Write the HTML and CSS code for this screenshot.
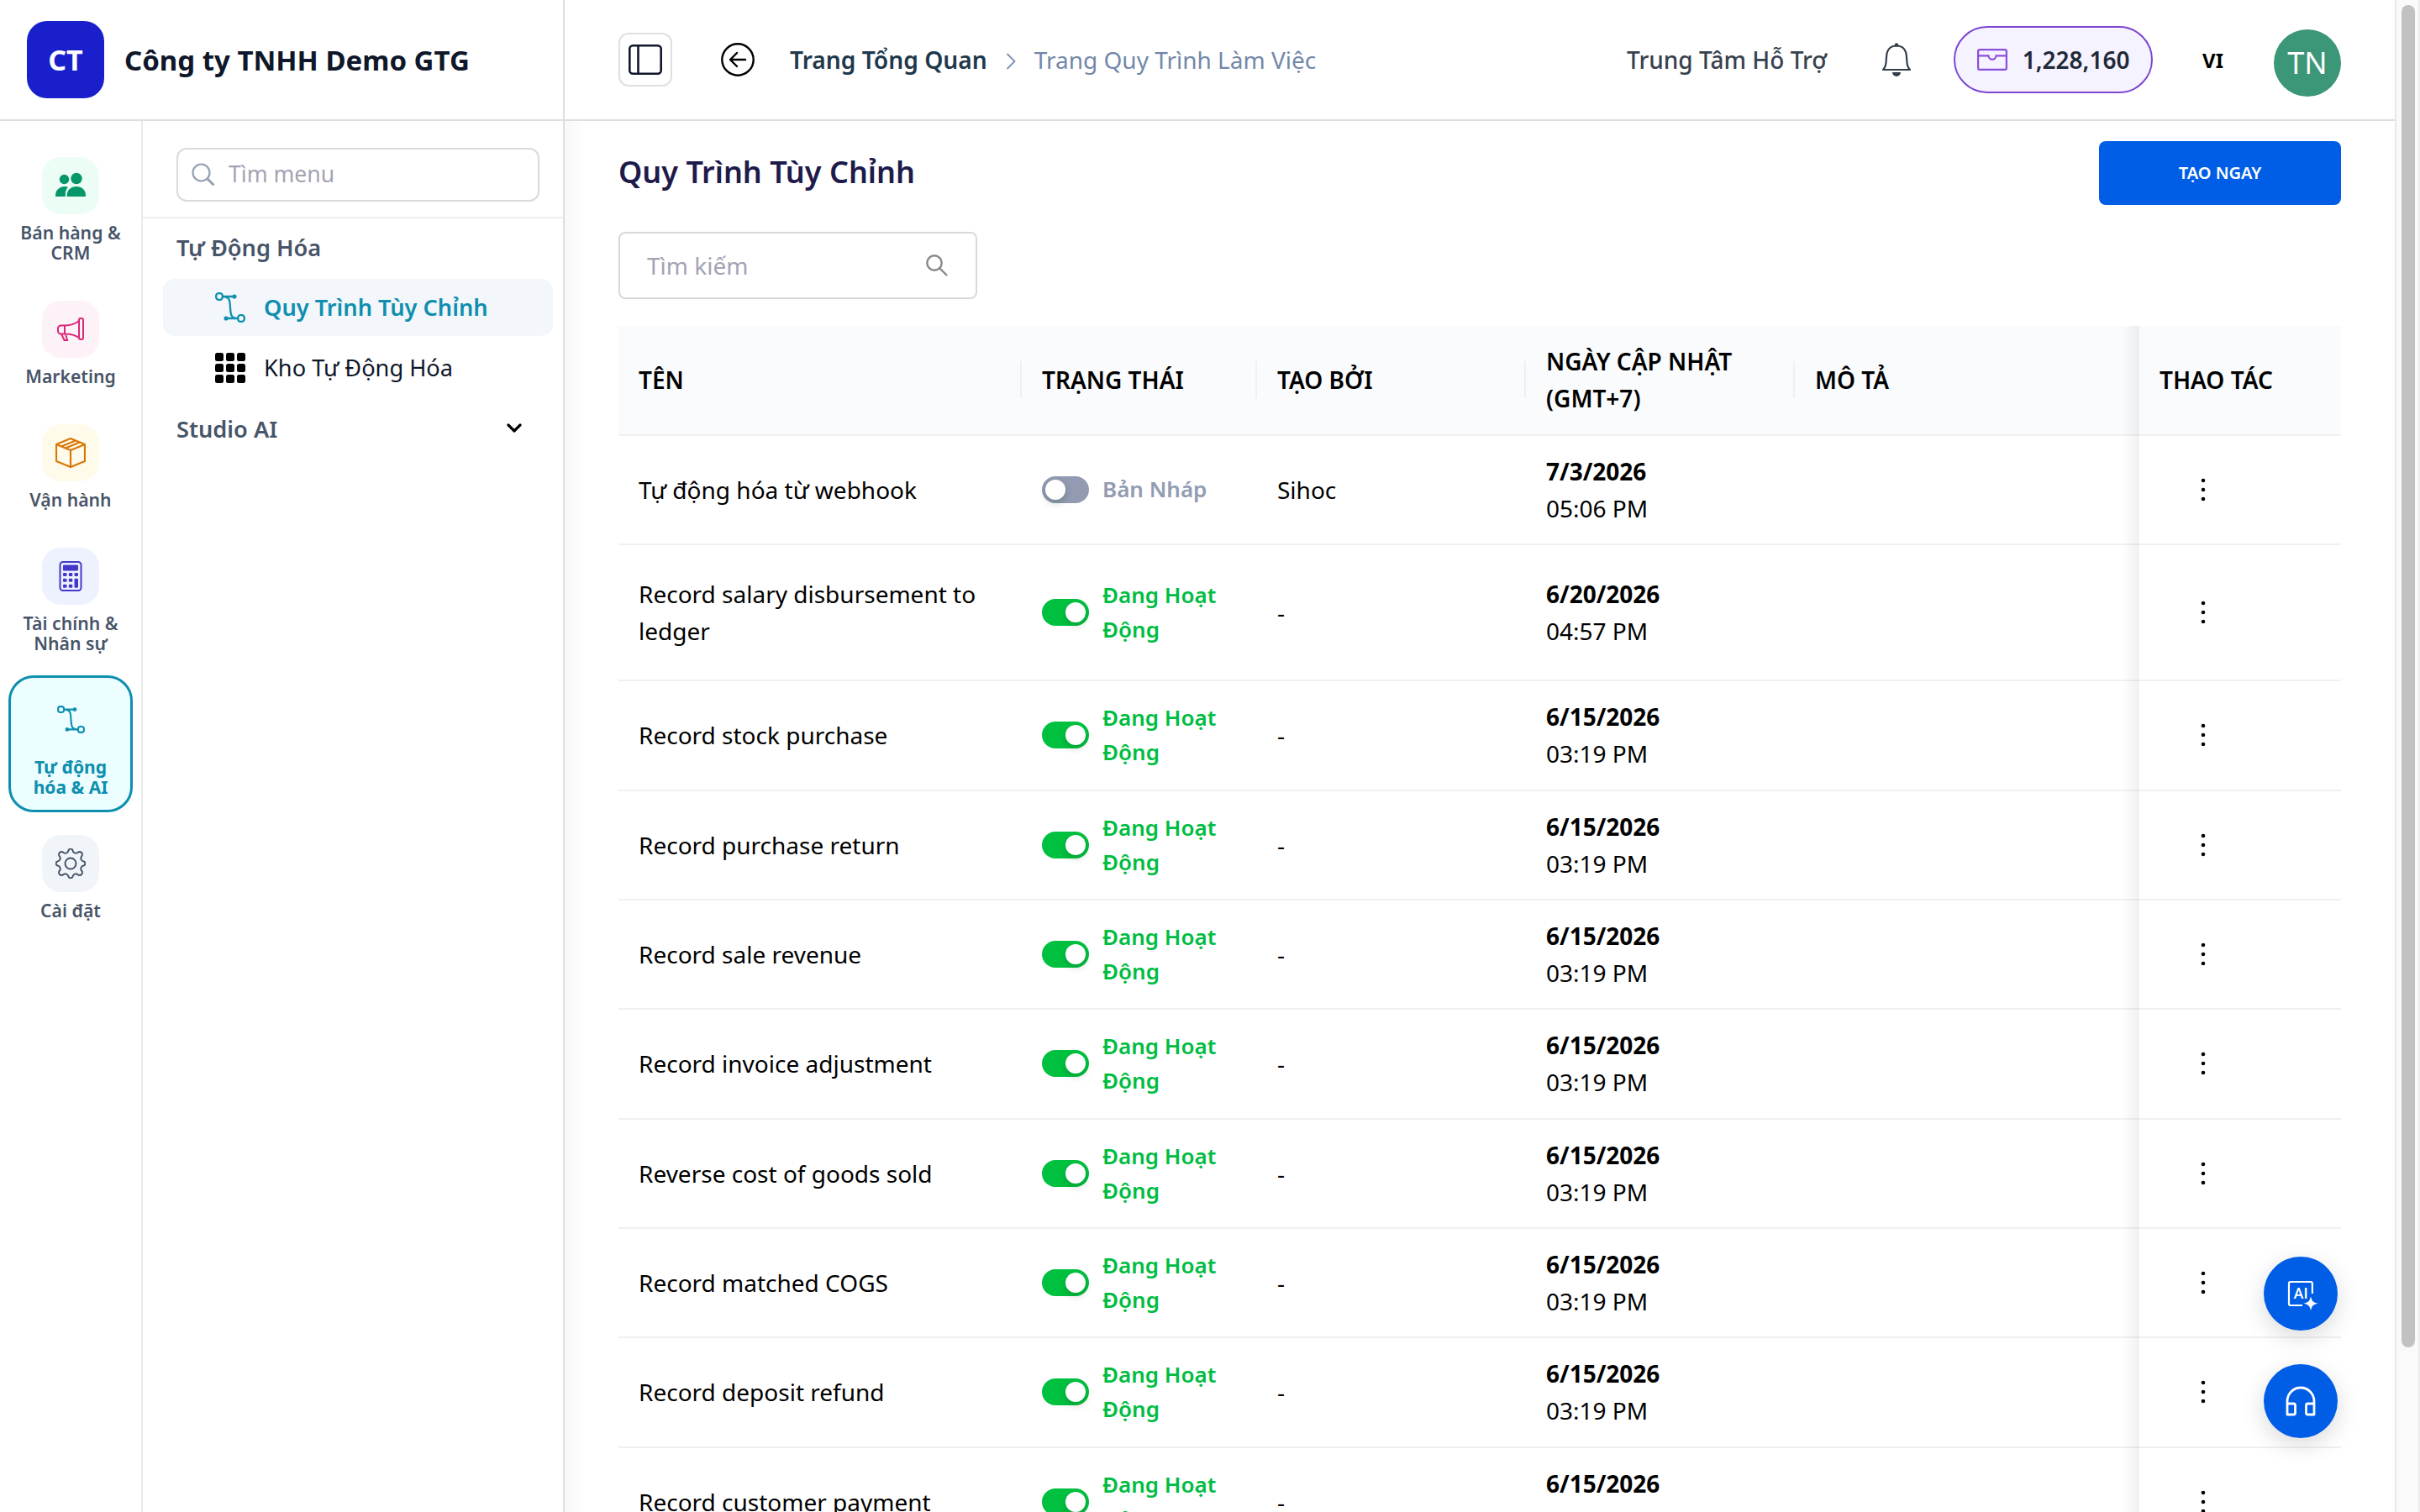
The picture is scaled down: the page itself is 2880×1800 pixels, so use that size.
FILE: index.html
```html
<!DOCTYPE html>
<html lang="vi">
<head>
    <meta charset="UTF-8">
    <meta name="viewport" content="width=device-width, initial-scale=1.0">
    <title>Quy Trình Tùy Chỉnh</title>
    <link rel="stylesheet" href="styles.css">
</head>
<body>

    <!-- Shared icons -->
    <svg class="sprite">
        <symbol id="flow" viewBox="0 0 36 36" fill="none" stroke="currentColor" stroke-width="2.3">
            <rect x="1.2" y="1.2" width="7.6" height="7.6" rx="3"/>
            <rect x="27.2" y="27.2" width="7.6" height="7.6" rx="3"/>
            <path d="M9 5h13M14 31h13M9 5c9 0 8.500 6 9 13s0 13 9 13"/>
            <circle cx="23" cy="5" r="1.4" fill="currentColor"/>
            <circle cx="13" cy="31" r="1.4" fill="currentColor"/>
        </symbol>
        <symbol id="search" viewBox="0 0 28 28" fill="none" stroke="currentColor" stroke-width="2.2">
            <circle cx="11.5" cy="11.5" r="10"/>
            <path d="M18.5 18.5l8 8" stroke-width="3"/>
        </symbol>
        <symbol id="search-thin" viewBox="0 0 26 26" fill="none" stroke="currentColor" stroke-width="2.4">
            <circle cx="10" cy="10" r="8.700"/>
            <path d="M16 16l9 9"/>
        </symbol>
    </svg>

    <div class="app">
        <aside class="sidebar">
            <div class="brand">
                <div class="brand-logo">CT</div>
                <div class="brand-name">Công ty TNHH Demo GTG</div>
            </div>
            <div class="sidebar-body">
                <nav class="rail">
                    <a class="rail-item green">
                        <span class="rail-icon"><svg width="36" height="36" viewBox="0 0 36 36" fill="currentColor"><circle cx="10.500" cy="10.500" r="5.700"/><circle cx="25" cy="9.500" r="6.700"/><path d="M0 30c0-7 5-11 11-11 1.500 0 3 .2 4 .7C12.500 22 11.800 25 11.800 30v1H1c-.6 0-1-.4-1-1z"/><path d="M13.500 30.500C13.500 23 18.500 19 25 19s11 4 11 11c0 .6-.4 1-1 1H14z"/></svg></span>
                        <span class="rail-label">Bán hàng &amp;<br>CRM</span>
                    </a>
                    <a class="rail-item pink">
                        <span class="rail-icon"><svg width="36" height="36" viewBox="0 0 36 36" fill="none" stroke="currentColor" stroke-width="2"><rect x="28" y="5" width="5" height="25" rx="2"/><path d="M28 8C23 12 18 13.500 11 13.500H6.500a3.500 3.500 0 0 0-3.500 3.500v3a3.500 3.500 0 0 0 3.500 3.500H11c7 0 12 1 17 4.500M11 13.500v10M7 23.500l3.500 7.500h3.500l-2-7.500"/></svg></span>
                        <span class="rail-label">Marketing</span>
                    </a>
                    <a class="rail-item amber">
                        <span class="rail-icon"><svg width="36" height="36" viewBox="0 0 36 36" fill="none" stroke="currentColor" stroke-width="2.200" stroke-linejoin="round"><path d="M18 1l17 7v20l-17 7-17-7V8zM1 8l17 7 17-7M18 15v20M7 10.500l17-7M12 12.500l17-7"/></svg></span>
                        <span class="rail-label">Vận hành</span>
                    </a>
                    <a class="rail-item indigo">
                        <span class="rail-icon"><svg width="36" height="36" viewBox="0 0 36 36"><rect x="5.500" y="1" width="25" height="34" rx="3.500" fill="none" stroke="currentColor" stroke-width="2"/><g fill="currentColor"><rect x="9" y="4.500" width="18" height="7" rx="1"/><rect x="9" y="14" width="4.500" height="4" rx="1"/><rect x="15.800" y="14" width="4.500" height="4" rx="1"/><rect x="22.500" y="14" width="4.500" height="4" rx="1"/><rect x="9" y="20.800" width="4.500" height="4" rx="1"/><rect x="15.800" y="20.800" width="4.500" height="4" rx="1"/><rect x="22.500" y="20.800" width="4.500" height="11" rx="1"/><rect x="9" y="27.800" width="4.500" height="4" rx="1"/><rect x="15.800" y="27.800" width="4.500" height="4" rx="1"/></g></svg></span>
                        <span class="rail-label">Tài chính &amp;<br>Nhân sự</span>
                    </a>
                    <a class="rail-item active">
                        <span class="rail-icon"><svg width="33" height="33"><use href="#flow"/></svg></span>
                        <span class="rail-label">Tự động<br>hóa &amp; AI</span>
                    </a>
                    <a class="rail-item slate">
                        <span class="rail-icon"><svg width="36" height="36" viewBox="0 0 36 36" fill="none" stroke="currentColor" stroke-width="2" stroke-linejoin="round"><circle cx="18" cy="18" r="6.500"/><path d="M15.500 2.500a2.600 2.600 0 0 1 5 0c.6 3 3.400 4 6 2.500a2.600 2.600 0 0 1 4.500 4.500c-1.500 2.600-.5 5.400 2.500 6a2.600 2.600 0 0 1 0 5c-3 .6-4 3.400-2.500 6a2.600 2.600 0 0 1-4.500 4.500c-2.600-1.500-5.400-.5-6 2.500a2.600 2.600 0 0 1-5 0c-.6-3-3.400-4-6-2.500A2.600 2.600 0 0 1 5 26.500c1.500-2.600.5-5.400-2.500-6a2.600 2.600 0 0 1 0-5c3-.6 4-3.400 2.500-6A2.600 2.600 0 0 1 9.500 5c2.600 1.500 5.400.5 6-2.500z"/></svg></span>
                        <span class="rail-label">Cài đặt</span>
                    </a>
                </nav>

                <div class="menu">
                    <div class="menu-search">
                        <div class="menu-input">
                            <svg width="28" height="28"><use href="#search"/></svg>
                            <span>Tìm menu</span>
                        </div>
                    </div>
                    <div class="menu-group">Tự Động Hóa</div>
                    <a class="menu-item selected">
                        <svg width="36" height="36"><use href="#flow"/></svg>
                        <span>Quy Trình Tùy Chỉnh</span>
                    </a>
                    <a class="menu-item">
                        <svg width="36" height="36" viewBox="0 0 36 36"><g><rect width="10" height="10" rx="2.500"/><rect x="13" width="10" height="10" rx="2.500"/><rect x="26" width="10" height="10" rx="2.500"/><rect y="13" width="10" height="10" rx="2.500"/><rect x="13" y="13" width="10" height="10" rx="2.500"/><rect x="26" y="13" width="10" height="10" rx="2.500"/><rect y="26" width="10" height="10" rx="2.500"/><rect x="13" y="26" width="10" height="10" rx="2.500"/><rect x="26" y="26" width="10" height="10" rx="2.500"/></g></svg>
                        <span>Kho Tự Động Hóa</span>
                    </a>
                    <div class="menu-group">
                        <span>Studio AI</span>
                        <svg width="18" height="12" viewBox="0 0 18 12" fill="none" stroke="#000" stroke-width="3.200" stroke-linecap="round" stroke-linejoin="round"><path d="M2 2l7 7 7-7"/></svg>
                    </div>
                </div>
            </div>
        </aside>

        <div class="content">
            <header class="topbar">
                <button class="toggle-menu"><svg width="40" height="36" viewBox="0 0 40 36" fill="none" stroke="#0f172a" stroke-width="2.600"><rect x="1.300" y="1.300" width="37.400" height="33.400" rx="4"/><path d="M11.500 1v34"/></svg></button>
                <svg class="back" width="40" height="40" viewBox="0 0 40 40" fill="none" stroke="#000" stroke-width="2.400"><circle cx="20" cy="20" r="18.700"/><path d="M29 20H12M19 12l-8 8 8 8" stroke-linecap="round" stroke-linejoin="round"/></svg>
                <div class="breadcrumb">
                    <b>Trang Tổng Quan</b>
                    <svg width="12" height="20" viewBox="0 0 12 20" fill="none" stroke="#7b8db0" stroke-width="1.800"><path d="M1.500 1l9 9-9 9"/></svg>
                    <span>Trang Quy Trình Làm Việc</span>
                </div>
                <div class="topbar-right">
                    <span class="help">Trung Tâm Hỗ Trợ</span>
                    <svg class="bell" width="34" height="40" viewBox="0 0 34 40" fill="none" stroke="#333d4a" stroke-width="2.200"><path d="M1 32h32c-3-3-3.500-6-4-15C28.500 8 24 3.500 17 3.500S5.500 8 5 17c-.5 9-1 12-4 15z" stroke-linejoin="round"/><circle cx="17" cy="2.500" r="2.200" fill="#333d4a" stroke="none"/><path d="M12 35h10a5 5 0 0 1-10 0z" fill="#333d4a" stroke="none"/></svg>
                    <div class="credits">
                        <svg width="36" height="26" viewBox="0 0 36 26" fill="none" stroke="#8b4ddb" stroke-width="2.200"><rect x="1.100" y="1.100" width="33.800" height="23.800" rx="2"/><path d="M1 8.300h12.500a4.500 4.500 0 0 0 9 0H35"/></svg>
                        <span>1,228,160</span>
                    </div>
                    <span class="lang">VI</span>
                    <div class="avatar">TN</div>
                </div>
            </header>

            <main class="page">
                <div class="page-head">
                    <h1>Quy Trình Tùy Chỉnh</h1>
                    <button class="create">TẠO NGAY</button>
                </div>
                <div class="search">
                    <span>Tìm kiếm</span>
                    <svg width="26" height="26"><use href="#search-thin"/></svg>
                </div>

                <div class="table">
                    <div class="row head">
                        <div>TÊN</div>
                        <div>TRẠNG THÁI</div>
                        <div>TẠO BỞI</div>
                        <div>NGÀY CẬP NHẬT<br>(GMT+7)</div>
                        <div>MÔ TẢ</div>
                        <div class="sticky">THAO TÁC</div>
                    </div>
                    <div id="rows"></div>
                </div>
            </main>
        </div>

        <div class="scrollbar"><div class="thumb"></div></div>
    </div>

    <div class="floating">
        <button class="fab"><svg width="38" height="38" viewBox="0 0 38 38" fill="none" stroke="#fff" stroke-width="2.200"><path d="M32.900 19V7a2 2 0 0 0-2-2H7a2 2 0 0 0-2 2v24a2 2 0 0 0 2 2h14"/><text x="10.500" y="25" class="ai-text">AI</text><path d="M31 22.200c1.300 5.700 2.900 7.300 8.500 8.500-5.600 1.200-7.200 2.800-8.500 8.500-1.300-5.700-2.900-7.300-8.500-8.500 5.600-1.200 7.200-2.800 8.500-8.500z" fill="#fff" stroke="none"/></svg></button>
        <button class="fab"><svg width="36" height="36" viewBox="0 0 36 36" fill="none" stroke="#fff" stroke-width="2.800" stroke-linejoin="round"><path d="M2 22v-4a16 16 0 0 1 32 0v4M2 21h7.500a2 2 0 0 1 2 2v9a2 2 0 0 1-2 2H2zM34 21h-7.500a2 2 0 0 0-2 2v9a2 2 0 0 0 2 2H34z"/></svg></button>
    </div>

    <script>
        const workflows = [
            ['Tự động hóa từ webhook', false, 'Sihoc', '7/3/2026', '05:06 PM'],
            ['Record salary disbursement to ledger', true, '-', '6/20/2026', '04:57 PM'],
            ['Record stock purchase', true, '-', '6/15/2026', '03:19 PM'],
            ['Record purchase return', true, '-', '6/15/2026', '03:19 PM'],
            ['Record sale revenue', true, '-', '6/15/2026', '03:19 PM'],
            ['Record invoice adjustment', true, '-', '6/15/2026', '03:19 PM'],
            ['Reverse cost of goods sold', true, '-', '6/15/2026', '03:19 PM'],
            ['Record matched COGS', true, '-', '6/15/2026', '03:19 PM'],
            ['Record deposit refund', true, '-', '6/15/2026', '03:19 PM'],
            ['Record customer payment', true, '-', '6/15/2026', '03:19 PM']
        ];

        document.getElementById('rows').innerHTML = workflows.map(([name, on, by, date, time]) => `
            <div class="row ${name.length > 30 ? 'tall' : ''}">
                <div>${name}</div>
                <div class="status ${on ? 'on' : ''}">
                    <span class="switch"></span>
                    <span>${on ? 'Đang Hoạt Động' : 'Bản Nháp'}</span>
                </div>
                <div>${by}</div>
                <div><span><b>${date}</b><br>${time}</span></div>
                <div></div>
                <div class="sticky"><svg class="more" width="6" height="28" viewBox="0 0 6 28"><circle cx="3" cy="3" r="2.300"/><circle cx="3" cy="14" r="2.300"/><circle cx="3" cy="25" r="2.300"/></svg></div>
            </div>`).join('');
    </script>

</body>
</html>
```
FILE: styles.css
```css
* {
    box-sizing: border-box;
}

html, body {
    height: 100%;
    margin: 0;
    overflow: hidden;
}

body {
    font-family: 'Noto Sans', sans-serif;
    font-size: 28px;
    color: #000;
    background: #fff;
}

button {
    font-family: inherit;
    padding: 0;
    border: none;
    display: flex;
    align-items: center;
    justify-content: center;
}

svg {
    flex: none;
    display: block;
}

.sprite {
    display: none;
}

.app {
    display: flex;
    height: 100vh;
}

/* Sidebar */
.sidebar {
    width: 672px;
    flex: none;
    display: flex;
    flex-direction: column;
    border-right: 2px solid #dcdee0;
}

.brand {
    height: 144px;
    flex: none;
    display: flex;
    align-items: center;
    gap: 24px;
    padding: 0 32px;
    border-bottom: 2px solid #dcdee0;
}

.brand-logo {
    width: 92px;
    height: 92px;
    border-radius: 24px;
    background: #181fcb;
    color: #fff;
    font-size: 34px;
    font-weight: 700;
    display: flex;
    align-items: center;
    justify-content: center;
}

.brand-name {
    font-size: 33px;
    font-weight: 700;
    color: #0f172a;
    white-space: nowrap;
}

.sidebar-body {
    flex: 1;
    display: flex;
}

.rail {
    width: 170px;
    flex: none;
    padding: 24px 10px;
    border-right: 2px solid #e8eaec;
    display: flex;
    flex-direction: column;
    gap: 8px;
}

.rail-item {
    border: 3px solid transparent;
    border-radius: 30px;
    padding: 16px 0 14.600px;
    display: flex;
    flex-direction: column;
    align-items: center;
    gap: 10px;
}

.rail-icon {
    width: 68px;
    height: 68px;
    border-radius: 22px;
    display: flex;
    align-items: center;
    justify-content: center;
}

.rail-label {
    font-size: 21.200px;
    font-weight: 600;
    line-height: 24.200px;
    text-align: center;
    white-space: nowrap;
    color: #475569;
}

.green .rail-icon { background: #ecfdf5; color: #059669; }
.pink .rail-icon { background: #fdf2f8; color: #db2777; }
.amber .rail-icon { background: #fffbeb; color: #d97706; }
.indigo .rail-icon { background: #eef2ff; color: #4338ca; }
.slate .rail-icon { background: #f1f5f9; color: #475569; }

.rail-item.active {
    background: #ecfeff;
    border-color: #0e8fae;
    color: #0e8fae;
}

.active .rail-label {
    color: #0e8fae;
    font-size: 21px;
    font-weight: 700;
}

.menu {
    flex: 1;
}

.menu-search {
    height: 116px;
    padding: 32px 28px 0 40px;
    border-bottom: 2px solid #eceef0;
}

.menu-input {
    height: 64px;
    border: 2px solid #d9dadc;
    border-radius: 12px;
    display: flex;
    align-items: center;
    gap: 16px;
    padding: 0 16px;
    color: #94a0b4;
}

.menu-input span {
    padding-bottom: 3px;
    font-size: 26.600px;
    color: #a3a3b3;
}

.menu-group {
    height: 72px;
    padding: 0 49px 4px 40px;
    display: flex;
    align-items: center;
    justify-content: space-between;
    font-size: 27.200px;
    font-weight: 600;
    color: #475569;
}

.menu-item {
    height: 68px;
    margin: 0 12px 4px 24px;
    padding-left: 62px;
    display: flex;
    align-items: center;
    gap: 22px;
    border-radius: 14px;
    font-size: 27.200px;
    color: #0f172a;
}

.menu-item span {
    padding-bottom: 1px;
}

.menu-item svg {
    fill: #000;
}

.menu-item.selected {
    background: #f3f6fa;
    color: #0e8fae;
    font-weight: 600;
}

.menu-item.selected svg {
    fill: none;
}

/* Top bar */
.content {
    flex: 1;
    min-width: 0;
    display: flex;
    flex-direction: column;
}

.topbar {
    height: 144px;
    flex: none;
    display: flex;
    align-items: center;
    padding: 0 64px 0 64px;
    border-bottom: 2px solid #dcdee0;
}

.toggle-menu {
    width: 64px;
    height: 64px;
    background: #fff;
    border: 2px solid #e0e0e0;
    border-radius: 12px;
}

.back {
    margin: 0 42px 0 58px;
}

.breadcrumb {
    display: flex;
    align-items: center;
    white-space: nowrap;
    color: #7388a9;
}

.breadcrumb b {
    font-size: 28.200px;
    font-weight: 600;
    color: #1e384c;
}

.breadcrumb svg {
    margin: 3px 22px 0;
}

.topbar-right {
    margin-left: auto;
    display: flex;
    align-items: center;
    white-space: nowrap;
}

.help {
    font-weight: 500;
    color: #37424f;
}

.bell {
    margin: 0 51px 0 66px;
}

.credits {
    width: 237px;
    height: 80px;
    border: 2.500px solid #7e45d0;
    border-radius: 40px;
    background: #f5f3ff;
    display: flex;
    align-items: center;
    justify-content: center;
    gap: 18px;
    font-weight: 600;
    color: #1f2937;
}

.lang {
    margin: 0 60px 0 59px;
    font-size: 24px;
    font-weight: 700;
}

.avatar {
    width: 80px;
    height: 80px;
    margin-top: 8px;
    border-radius: 50%;
    background: #3c9678;
    color: #fff;
    font-size: 36px;
    display: flex;
    align-items: center;
    justify-content: center;
    padding-bottom: 2px;
}

/* Page */
.page {
    flex: 1;
    overflow: hidden;
    padding: 24px 64px 0;
    background: linear-gradient(90deg, #f7f8f9, #fff 26px);
}

.page-head {
    display: flex;
    align-items: center;
    justify-content: space-between;
    height: 76px;
}

.page-head h1 {
    margin: 0;
    padding-bottom: 3px;
    font-size: 36px;
    font-weight: 600;
    color: #1e1b4b;
}

.create {
    width: 288px;
    height: 76px;
    padding-bottom: 2px;
    border-radius: 8px;
    background: #005ee6;
    color: #fff;
    font-size: 20px;
    font-weight: 600;
}

.search {
    width: 427px;
    height: 80px;
    margin: 32px 0;
    padding: 0 33px 0 32px;
    border: 2px solid #d9d9d9;
    border-radius: 8px;
    background: #fff;
    display: flex;
    align-items: center;
    justify-content: space-between;
    color: #888;
}

.search span {
    color: #a3a3b3;
}

/* Table */
.row {
    height: 130.330px;
    display: grid;
    grid-template-columns: 480px 280px 320px 320px 410px 240px;
    border-bottom: 2px solid #f0f0f0;
    line-height: 44px;
}

.row.tall {
    height: 162.300px;
}

.row > div {
    display: flex;
    align-items: center;
    padding: 0 24px;
    position: relative;
}

.row.head {
    height: 130.700px;
    background: #fafbfd;
    font-weight: 600;
}

/* thin divider between header columns */
.row.head > div:nth-child(-n+4)::after {
    content: '';
    position: absolute;
    right: 0;
    width: 2px;
    height: 44px;
    background: #f0f0f0;
}

/* shadow beside the fixed action column */
.row .sticky::before {
    content: '';
    position: absolute;
    left: -20px;
    top: 0;
    bottom: -2px;
    width: 20px;
    background: linear-gradient(270deg, rgba(0, 0, 0, 0.06), rgba(0, 0, 0, 0));
}

.row .status {
    gap: 16px;
    font-size: 26px;
    font-weight: 600;
    line-height: 41px;
    color: #929bb1;
}

.row .status.on {
    color: #00bd42;
}

.switch {
    width: 56px;
    height: 32px;
    flex: none;
    padding: 4px;
    border-radius: 16px;
    background: #929bb1;
    display: flex;
}

.switch::after {
    content: '';
    width: 24px;
    height: 24px;
    border-radius: 50%;
    background: #fff;
    box-shadow: 0 4px 8px rgba(0, 35, 11, 0.2);
}

.on .switch {
    background: #00c13f;
    justify-content: flex-end;
}

.more {
    margin-left: 49px;
}

/* Scrollbar */
.scrollbar {
    width: 30px;
    flex: none;
    padding: 6px 4px 0 6px;
    background: #fafafa;
    border-left: 2px solid #e8e8e8;
    border-right: 2px solid #ededed;
}

.thumb {
    width: 16px;
    height: 1598px;
    border-radius: 8px;
    background: #c1c1c1;
}

/* Floating buttons */
.floating {
    position: absolute;
    right: 98px;
    bottom: 88px;
    display: flex;
    flex-direction: column;
    gap: 40px;
}

.fab {
    width: 88px;
    height: 88px;
    border-radius: 50%;
    background: #005ee6;
    box-shadow: 0 8px 28px rgba(0, 0, 0, 0.15);
}

.fab svg {
    overflow: visible;
}

.ai-text {
    font-family: Roboto, sans-serif;
    font-size: 18px;
    font-weight: 500;
    fill: #fff;
    stroke: none;
}
```
